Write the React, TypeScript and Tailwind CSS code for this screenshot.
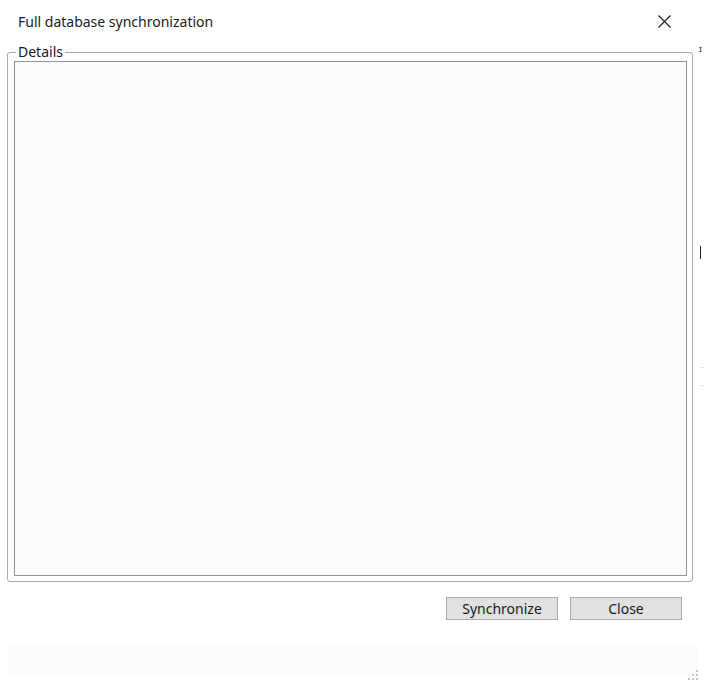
import React from 'react'

const FONT = { fontFamily: '"Noto Sans", "Open Sans", sans-serif' }

function ResizeGrip() {
  const dots = [
    [10, 0],
    [10, 4], [6, 4],
    [10, 8], [6, 8], [2, 8],
  ]
  return (
    <svg width="12" height="10" viewBox="0 0 12 10" className="block">
      {dots.map(([x, y], i) => (
        <rect key={i} x={x} y={y} width="2" height="2" fill="#c4c4c4" />
      ))}
    </svg>
  )
}

export default function App() {
  return (
    <div className="flex w-[704px] h-[683px] bg-white text-[#1a1a1a]" style={FONT}>
      <div className="flex flex-col w-[698px]">
        <header className="flex items-start justify-between h-[43px] pl-[18px] pr-[27px]">
          <h1 className="pt-[12px] text-[14px] leading-[20px] font-normal">
            Full database synchronization
          </h1>
          <button className="mt-[15px] w-[13px] h-[13px]">
            <svg width="13" height="13" viewBox="0 0 13 13" className="block">
              <path d="M0.5 0.5 L12.5 12.5 M12.5 0.5 L0.5 12.5" stroke="#1a1a1a" strokeWidth="1.1" />
            </svg>
          </button>
        </header>

        <fieldset className="ml-[7px] w-[686px] border border-[#a9a9a9] rounded-[3px] pl-[6px] pr-[5px] pb-[5px]">
          <legend className="ml-[2px] px-[2px] text-[14px] leading-[18px]">Details</legend>
          <textarea
            readOnly
            className="block w-[673px] h-[515px] resize-none border border-[#8a95a3] bg-[#fcfcfc] outline-none"
          />
        </fieldset>

        <div className="flex justify-end gap-[12px] mt-[15px] pr-[16px]">
          <button className="w-[112px] h-[23px] bg-[#e1e1e1] border border-[#adadad] text-[14px] leading-[20px]">
            Synchronize
          </button>
          <button className="w-[112px] h-[23px] bg-[#e1e1e1] border border-[#adadad] text-[14px] leading-[20px]">
            Close
          </button>
        </div>

        <div className="mt-[23px] ml-[8px] h-[34px] bg-[#fdfcfd] flex items-end justify-end">
          <div className="mb-[-3px]">
            <ResizeGrip />
          </div>
        </div>
      </div>

      <div className="flex flex-col w-[6px]">
        <div className="mt-[44px] ml-[1px] text-[9px] leading-[9px] text-[#333]">ɪ</div>
        <div className="mt-[193px] ml-[2px] w-[1px] h-[13px] bg-[#1e1b4b]" />
        <div className="mt-[108px] ml-[2px] w-[4px] h-[1px] bg-[#e4e4e4]" />
        <div className="mt-[17px] ml-[2px] w-[4px] h-[1px] bg-[#e4e4e4]" />
      </div>
    </div>
  )
}
